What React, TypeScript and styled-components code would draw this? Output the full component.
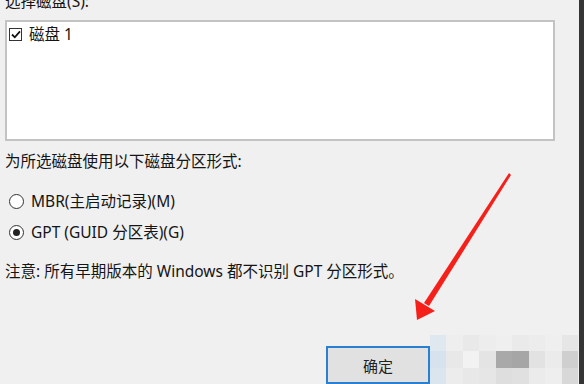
import React from 'react'
import styled, { createGlobalStyle } from 'styled-components'

const GlobalStyle = createGlobalStyle`
  html, body {
    margin: 0;
    padding: 0;
    background: #f0f0f0;
  }
  body {
    font-family: "Noto Sans", "Noto Sans CJK SC", sans-serif;
    color: #151515;
  }
`

const Window = styled.div`
  position: relative;
  display: flex;
  flex-direction: column;
  box-sizing: border-box;
  width: 584px;
  height: 384px;
  overflow: hidden;
  padding-left: 5px;
  border-right: 5px solid #353535;
  background: #f0f0f0;
  font-size: 15.5px;
`

const Label = styled.div<{ $top?: number }>`
  margin-top: ${(p) => p.$top ?? 0}px;
  line-height: 20px;
  white-space: nowrap;
`

const ListBox = styled.div`
  box-sizing: border-box;
  width: 550px;
  height: 121px;
  margin-top: 9px;
  border: 2px solid #c3c3c3;
  background: #fff;
  padding: 2px 2px;
`

const Row = styled.label`
  display: flex;
  align-items: center;
  gap: 7px;
  line-height: 20px;
  white-space: nowrap;
`

const Check = styled.span`
  display: flex;
  align-items: center;
  justify-content: center;
  box-sizing: border-box;
  width: 13px;
  height: 13px;
  border: 1px solid #333;
  background: #fff;
`

const Options = styled.div`
  display: flex;
  flex-direction: column;
  gap: 11px;
  margin-top: 20px;
  padding-left: 4px;
`

const Radio = styled.span<{ $checked?: boolean }>`
  display: flex;
  align-items: center;
  justify-content: center;
  box-sizing: border-box;
  width: 15px;
  height: 15px;
  border-radius: 50%;
  border: 1px solid #333;
  background: #fff;
  &::after {
    content: '';
    display: ${(p) => (p.$checked ? 'block' : 'none')};
    width: 7px;
    height: 7px;
    border-radius: 50%;
    background: #222;
  }
`

const Footer = styled.div`
  display: flex;
  align-items: flex-end;
  justify-content: flex-end;
  margin-top: auto;
  padding-right: 1px;
`

const Button = styled.button`
  box-sizing: border-box;
  width: 104px;
  height: 38px;
  border: 2px solid #2a7fd0;
  background: #e1e1e1;
  font-family: "Noto Sans CJK SC", sans-serif;
  font-size: 15px;
  color: #222;
  padding: 0;
`

const Mosaic = styled.div`
  display: grid;
  grid-template-columns: repeat(9, 1fr);
  grid-template-rows: repeat(3, 1fr);
  width: 148px;
  height: 49px;
`

const Tile = styled.div<{ $c: string }>`
  background: ${(p) => p.$c};
`

const Arrow = styled.svg`
  position: absolute;
  left: 0;
  top: 0;
  pointer-events: none;
`

const tiles = [
  '#dfe8ef', '#eeeeee', '#e9e9e9', '#ededed', '#efefef', '#eaeaea', '#ececec', '#efefef', '#e6e6e6',
  '#d6e3ee', '#e8e8e8', '#f2f2f2', '#e4e4e4', '#a9a9a9', '#a6a6a6', '#e2e2e2', '#ebebeb', '#cfcfcf',
  '#dbe5ee', '#ececec', '#e8e8e8', '#e6e6e6', '#dedede', '#e0e0e0', '#ebebeb', '#eeeeee', '#d8d8d8',
]

export default function App() {
  return (
    <>
      <GlobalStyle />
      <Window>
        <Label $top={-9}>选择磁盘(S):</Label>
        <ListBox>
          <Row>
            <Check>
              <svg width="10" height="9" viewBox="0 0 10 9">
                <path d="M1 4.5 L3.8 7.3 L9 1.3" fill="none" stroke="#111" strokeWidth="1.8" />
              </svg>
            </Check>
            磁盘 1
          </Row>
        </ListBox>
        <Label $top={10}>为所选磁盘使用以下磁盘分区形式:</Label>
        <Options>
          <Row>
            <Radio />
            MBR(主启动记录)(M)
          </Row>
          <Row>
            <Radio $checked />
            GPT (GUID 分区表)(G)
          </Row>
        </Options>
        <Label $top={19}>注意: 所有早期版本的 Windows 都不识别 GPT 分区形式。</Label>
        <Footer>
          <Button>确定</Button>
          <Mosaic>
            {tiles.map((c, i) => (
              <Tile key={i} $c={c} />
            ))}
          </Mosaic>
        </Footer>
        <Arrow width="584" height="384" viewBox="0 0 584 384">
          <path d="M509 173 L511 175 L429 306 L424 303 Z" fill="#f5201a" />
          <path d="M417 320 L415 299 L435 311 Z" fill="#f5201a" />
        </Arrow>
      </Window>
    </>
  )
}
